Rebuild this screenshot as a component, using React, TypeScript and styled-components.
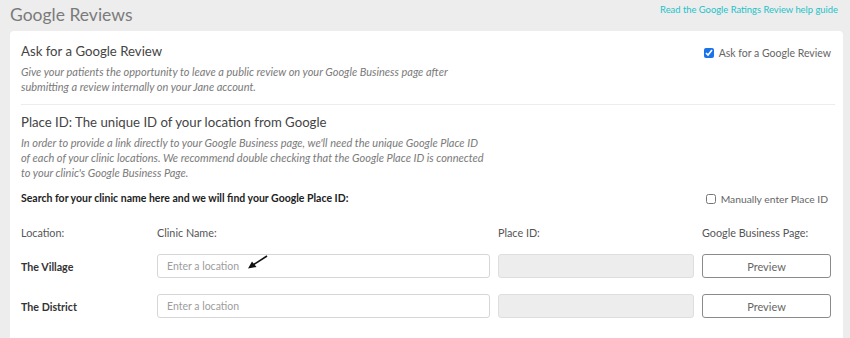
import React from "react";
import styled, { createGlobalStyle } from "styled-components";

const Global = createGlobalStyle`
  html, body { margin: 0; padding: 0; }
  body {
    background: #ededed;
    font-family: "Lato", "Open Sans", "Liberation Sans", sans-serif;
    color: #555;
  }
`;

const Page = styled.div`
  width: 850px;
  height: 338px;
  overflow: hidden;
  display: flex;
  flex-direction: column;
`;

const TopBar = styled.div`
  height: 31px;
  padding: 0 12px 0 10px;
  display: flex;
  align-items: flex-start;
  justify-content: space-between;
  box-sizing: border-box;
`;

const PageTitle = styled.h1`
  margin: 4px 0 0 0;
  font-size: 17.5px;
  line-height: 22px;
  font-weight: 400;
  color: #7b7b7b;
`;

const HelpLink = styled.a`
  margin-top: 4px;
  font-size: 9.4px;
  line-height: 12px;
  color: #22c2c8;
  font-weight: 400;
  text-decoration: none;
`;

const Card = styled.div`
  flex: 1;
  margin: 0 7px 0 10px;
  background: #fff;
  border-radius: 4px 4px 0 0;
  padding: 0 12px 0 11px;
`;

const Section = styled.section<{ $divided?: boolean }>`
  padding: ${(p) => (p.$divided ? "11px 0 10px" : "8px 0 0")};
  border-bottom: ${(p) => (p.$divided ? "1px solid #ececec" : "none")};
  margin-right: ${(p) => (p.$divided ? "-4px" : "0")};
`;

const HeadRow = styled.div`
  display: flex;
  justify-content: space-between;
  align-items: flex-start;
`;

const Heading = styled.h2`
  margin: 0;
  font-size: 13.2px;
  line-height: 18px;
  font-weight: 400;
  color: #444;
`;

const Description = styled.p`
  margin: 4px 0 0;
  font-size: 11px;
  line-height: 15px;
  font-style: italic;
  color: #7a7a7a;
  white-space: nowrap;
`;

const CheckLabel = styled.label<{ $size?: number }>`
  display: flex;
  align-items: center;
  gap: 5px;
  font-size: ${(p) => p.$size ?? 10.5}px;
  color: #666;
  line-height: 14px;
`;

const CheckBox = styled.input`
  margin: 0;
  width: 10px;
  height: 10px;
  accent-color: #1a73e8;
`;

const TopCheck = styled(CheckLabel)`
  margin-top: 4px;
  margin-right: 4px;
`;

const SearchRow = styled.div`
  margin-top: 11px;
  display: flex;
  justify-content: space-between;
  align-items: center;
  padding-right: 3px;
`;

const BoldText = styled.div`
  font-size: 10.5px;
  line-height: 15px;
  font-weight: 700;
  color: #222;
`;

const Grid = styled.div`
  margin-top: 19px;
  display: grid;
  grid-template-columns: 128px 333px 196px 129px;
  column-gap: 8px;
  row-gap: 16px;
  align-items: center;
`;

const ColLabel = styled.div`
  font-size: 10.8px;
  line-height: 15px;
  color: #555;
  margin-bottom: -2px;
`;

const LocName = styled.div`
  font-size: 10.7px;
  font-weight: 700;
  color: #333;
`;

const InputWrap = styled.div`
  position: relative;
`;

const TextInput = styled.input<{ $disabled?: boolean }>`
  box-sizing: border-box;
  width: 100%;
  height: 24px;
  border: 1px solid ${(p) => (p.$disabled ? "#dedede" : "#d6d6d6")};
  border-radius: 3px;
  background: ${(p) => (p.$disabled ? "#ededed" : "#fff")};
  padding: 0 9px;
  font-family: inherit;
  font-size: 10.5px;
  color: #555;
  outline: none;
  &::placeholder { color: #9d9d9d; }
`;

const PreviewButton = styled.button`
  box-sizing: border-box;
  width: 100%;
  height: 24px;
  border: 1px solid #8a8a8a;
  border-radius: 3px;
  background: #fff;
  font-family: inherit;
  font-size: 11px;
  color: #666;
`;

const Arrow = styled.svg`
  position: absolute;
  left: 90px;
  top: 1px;
  pointer-events: none;
`;

const locations = ["The Village", "The District"];

export default function App() {
  return (
    <Page>
      <Global />
      <TopBar>
        <PageTitle>Google Reviews</PageTitle>
        <HelpLink href="#">Read the Google Ratings Review help guide</HelpLink>
      </TopBar>
      <Card>
        <Section $divided>
          <HeadRow>
            <Heading>Ask for a Google Review</Heading>
            <TopCheck>
              <CheckBox type="checkbox" defaultChecked />
              Ask for a Google Review
            </TopCheck>
          </HeadRow>
          <Description>
            Give your patients the opportunity to leave a public review on your Google Business page after
            <br />
            submitting a review internally on your Jane account.
          </Description>
        </Section>
        <Section>
          <Heading>Place ID: The unique ID of your location from Google</Heading>
          <Description>
            In order to provide a link directly to your Google Business page, we'll need the unique Google Place ID
            <br />
            of each of your clinic locations. We recommend double checking that the Google Place ID is connected
            <br />
            to your clinic's Google Business Page.
          </Description>
          <SearchRow>
            <BoldText>Search for your clinic name here and we will find your Google Place ID:</BoldText>
            <CheckLabel $size={10.3}>
              <CheckBox type="checkbox" />
              Manually enter Place ID
            </CheckLabel>
          </SearchRow>
          <Grid>
            <ColLabel>Location:</ColLabel>
            <ColLabel>Clinic Name:</ColLabel>
            <ColLabel>Place ID:</ColLabel>
            <ColLabel>Google Business Page:</ColLabel>
            {locations.map((loc, i) => (
              <React.Fragment key={loc}>
                <LocName>{loc}</LocName>
                <InputWrap>
                  <TextInput placeholder="Enter a location" />
                  {i === 0 && (
                    <Arrow width="22" height="16" viewBox="0 0 22 16">
                      <line x1="20" y1="1" x2="6" y2="10" stroke="#111" strokeWidth="1.6" />
                      <polygon points="1,13.5 5,6.5 9.5,12" fill="#111" />
                    </Arrow>
                  )}
                </InputWrap>
                <TextInput $disabled disabled />
                <PreviewButton>Preview</PreviewButton>
              </React.Fragment>
            ))}
          </Grid>
        </Section>
      </Card>
    </Page>
  );
}
